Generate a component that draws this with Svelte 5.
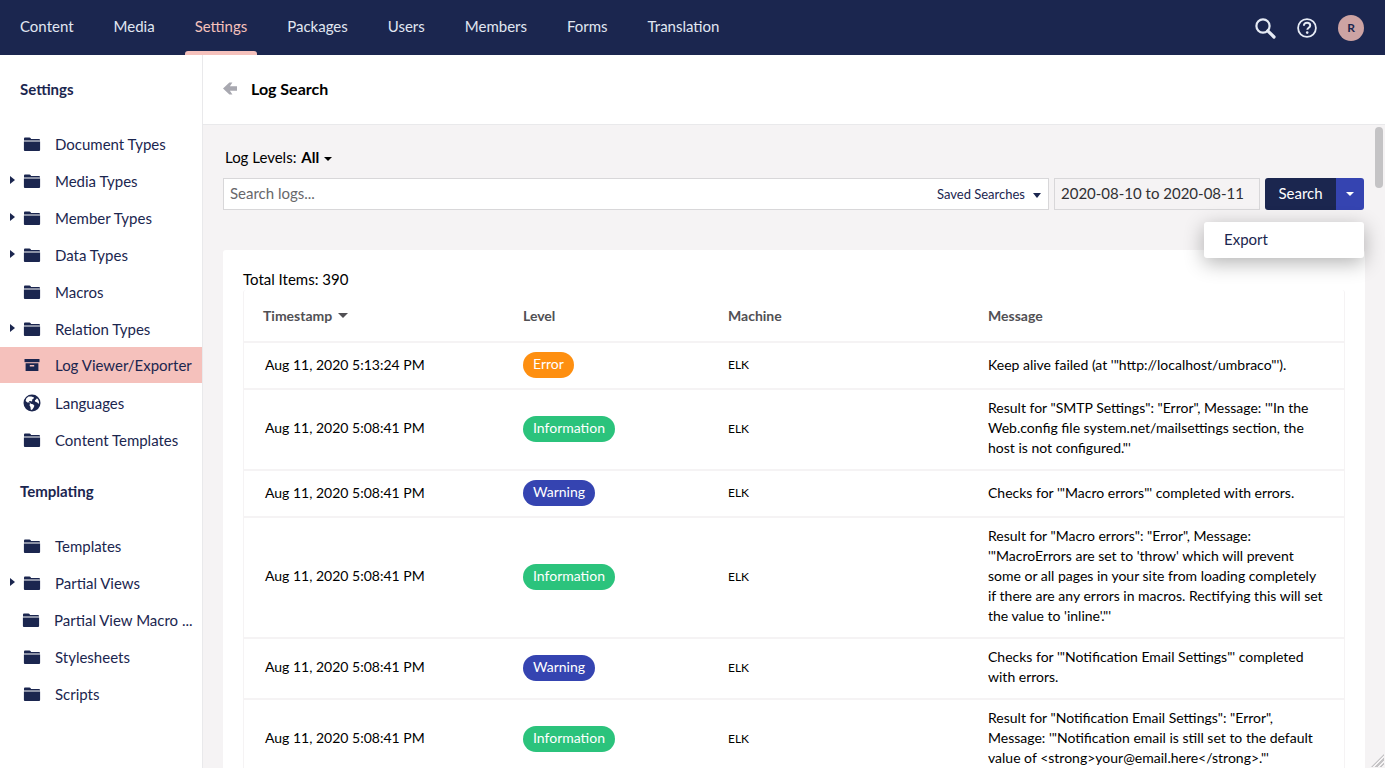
<script lang="ts">
	type TreeItem = { name: string; icon: string; arrow?: boolean; active?: boolean; nudge?: boolean };
	type LogRow = { time: string; level: string; message: string[] };

	const navItems = ['Content', 'Media', 'Settings', 'Packages', 'Users', 'Members', 'Forms', 'Translation'];

	const settingsItems: TreeItem[] = [
		{ name: 'Document Types', icon: 'folder' },
		{ name: 'Media Types', icon: 'folder', arrow: true },
		{ name: 'Member Types', icon: 'folder', arrow: true },
		{ name: 'Data Types', icon: 'folder', arrow: true },
		{ name: 'Macros', icon: 'folder' },
		{ name: 'Relation Types', icon: 'folder', arrow: true },
		{ name: 'Log Viewer/Exporter', icon: 'box', active: true },
		{ name: 'Languages', icon: 'globe' },
		{ name: 'Content Templates', icon: 'folder' }
	];

	const templatingItems: TreeItem[] = [
		{ name: 'Templates', icon: 'folder' },
		{ name: 'Partial Views', icon: 'folder', arrow: true },
		{ name: 'Partial View Macro ...', icon: 'folder', nudge: true },
		{ name: 'Stylesheets', icon: 'folder' },
		{ name: 'Scripts', icon: 'folder' }
	];

	const rows: LogRow[] = [
		{
			time: 'Aug 11, 2020 5:13:24 PM',
			level: 'Error',
			message: [`Keep alive failed (at '"http://localhost/umbraco"').`]
		},
		{
			time: 'Aug 11, 2020 5:08:41 PM',
			level: 'Information',
			message: [
				`Result for "SMTP Settings": "Error", Message: '"In the`,
				`Web.config file system.net/mailsettings section, the`,
				`host is not configured."'`
			]
		},
		{
			time: 'Aug 11, 2020 5:08:41 PM',
			level: 'Warning',
			message: [`Checks for '"Macro errors"' completed with errors.`]
		},
		{
			time: 'Aug 11, 2020 5:08:41 PM',
			level: 'Information',
			message: [
				`Result for "Macro errors": "Error", Message:`,
				`'"MacroErrors are set to 'throw' which will prevent`,
				`some or all pages in your site from loading completely`,
				`if there are any errors in macros. Rectifying this will set`,
				`the value to 'inline'."'`
			]
		},
		{
			time: 'Aug 11, 2020 5:08:41 PM',
			level: 'Warning',
			message: [`Checks for '"Notification Email Settings"' completed`, `with errors.`]
		},
		{
			time: 'Aug 11, 2020 5:08:41 PM',
			level: 'Information',
			message: [
				`Result for "Notification Email Settings": "Error",`,
				`Message: '"Notification email is still set to the default`,
				`value of <strong>your@email.here</strong>."'`
			]
		}
	];
</script>

{#snippet treeRow(item: TreeItem)}
	<li class="tree-row" class:active={item.active} class:nudge={item.nudge}>
		{#if item.arrow}<span class="tree-arrow"></span>{/if}
		{#if item.icon === 'folder'}
			<svg class="tree-icon" viewBox="0 0 18 15" aria-hidden="true">
				<path d="M1 2.2C1 1.5 1.5 1 2.2 1h4.2c.6 0 1 .3 1.3.8l.3.6h7.8c.7 0 1.2.5 1.2 1.2v.3H1z" />
				<path d="M.9 5h16.2v8.2c0 .8-.5 1.3-1.3 1.3H2.2c-.8 0-1.3-.5-1.3-1.3z" />
			</svg>
		{:else if item.icon === 'box'}
			<svg class="tree-icon" viewBox="0 0 18 15" aria-hidden="true">
				<path d="M1.5 1.5h15v3.2h-15z" />
				<path fill-rule="evenodd" d="M2.6 5.8h12.8v7.7H2.6zM6.8 7.5v1.6h4.4V7.5z" />
			</svg>
		{:else}
			<svg class="tree-icon" viewBox="0 0 18 18" aria-hidden="true">
				<path
					fill-rule="evenodd"
					d="M9 .5a8.5 8.5 0 1 1 0 17 8.5 8.5 0 0 1 0-17zM5.6 2.6 3.4 4.3 2.6 7l1.8 1.5 1.4-.1 1.3 1.2-.6 1.6 1 1.7.2 2.7 1.2.4 1.5-2 1-2.2-1.4-1.6-2.3-.5-.7-1.1-1.2.2.2-1.6 1.5-.3.8.6 1-.4-.4-1.3 1.6-1.1.4-1.5-2.7-.6zM13 5.6l-1.2.7.5 1.5 2 .8 1.2 1.5.6-2-1-2.6-1.2-1.2z"
				/>
			</svg>
		{/if}
		<span>{item.name}</span>
	</li>
{/snippet}

<div class="shell">
	<header class="topbar">
		<nav class="topnav">
			{#each navItems as item}
				<div class="nav-item" class:current={item === 'Settings'}>{item}</div>
			{/each}
		</nav>
		<div class="top-tools">
			<svg class="tool" viewBox="0 0 22 22" aria-hidden="true">
				<circle cx="9" cy="9" r="6.6" fill="none" stroke="#e6ebf5" stroke-width="2.2" />
				<path d="M13.8 13.8 20 20" stroke="#e6ebf5" stroke-width="3.2" stroke-linecap="round" />
			</svg>
			<svg class="tool help" viewBox="0 0 22 22" aria-hidden="true">
				<circle cx="11" cy="11" r="8.9" fill="none" stroke="#e6ebf5" stroke-width="1.8" />
				<path
					d="M7.9 8.7c0-1.9 1.3-3 3.2-3s3.1 1.1 3.1 2.7c0 2.3-2.9 2.4-2.9 4.4"
					fill="none"
					stroke="#e6ebf5"
					stroke-width="2"
				/>
				<circle cx="11.2" cy="15.6" r="1.3" fill="#e6ebf5" />
			</svg>
			<div class="avatar">R</div>
		</div>
	</header>

	<div class="body-row">
		<aside class="sidebar">
			<h3 class="tree-title">Settings</h3>
			<ul class="tree">
				{#each settingsItems as item}
					{@render treeRow(item)}
				{/each}
			</ul>
			<h3 class="tree-title">Templating</h3>
			<ul class="tree">
				{#each templatingItems as item}
					{@render treeRow(item)}
				{/each}
			</ul>
		</aside>

		<main class="main">
			<div class="page-head">
				<svg class="back" viewBox="0 0 14 13" aria-hidden="true">
					<path d="M0 6.5 6.4.4h3L6.9 4.3H14v4.4H6.9l2.5 3.9h-3z" />
				</svg>
				<h1>Log Search</h1>
			</div>

			<div class="page-body">
				<div class="levels">Log Levels: <b>All</b><span class="caret dark"></span></div>

				<div class="search-row">
					<div class="search-box">
						<span class="placeholder">Search logs...</span>
						<span class="saved">Saved Searches<span class="caret navy"></span></span>
					</div>
					<div class="date-box">2020-08-10 to 2020-08-11</div>
					<div class="split-btn">
						<div class="btn-main">Search</div>
						<div class="btn-side"><span class="caret light"></span></div>
						<div class="menu">Export</div>
					</div>
				</div>

				<section class="card">
					<div class="total">Total Items: 390</div>
					<div class="table">
						<div class="row head">
							<div>Timestamp<span class="caret grey"></span></div>
							<div>Level</div>
							<div>Machine</div>
							<div>Message</div>
						</div>
						{#each rows as row}
							<div class="row" class:multi={row.message.length > 1}>
								<div class="time">{row.time}</div>
								<div><span class="badge {row.level.toLowerCase()}">{row.level}</span></div>
								<div class="machine">ELK</div>
								<div class="message">
									{#each row.message as line}
										<div>{line}</div>
									{/each}
								</div>
							</div>
						{/each}
					</div>
				</section>
			</div>

			<div class="scroll-thumb"></div>
			<div class="grip"></div>
		</main>
	</div>
</div>

<style>
	:global(body) {
		margin: 0;
		overflow: hidden;
		font-family: Lato, 'Noto Sans', sans-serif;
	}

	.shell {
		display: flex;
		flex-direction: column;
		height: 100vh;
		overflow: hidden;
		color: #1b264f;
	}

	.topbar {
		flex: none;
		display: flex;
		justify-content: space-between;
		align-items: center;
		height: 55px;
		padding: 0 21px 0 0;
		background: #1b264f;
	}

	.topnav {
		display: flex;
		height: 100%;
	}

	.nav-item {
		position: relative;
		display: flex;
		align-items: center;
		padding: 0 20px;
		height: 52px;
		font-size: 15px;
		color: #e1e6f2;
	}

	.nav-item.current {
		color: #f5c1bc;
		padding: 0 10px;
		margin: 0 10px;
	}

	.nav-item.current::after {
		content: '';
		position: absolute;
		left: 0;
		right: 0;
		bottom: -3px;
		height: 4px;
		border-radius: 3px 3px 0 0;
		background: #f5c1bc;
	}

	.top-tools {
		display: flex;
		align-items: center;
	}

	.tool {
		width: 22px;
		height: 22px;
		margin-right: 20px;
	}

	.tool.help {
		margin-right: 20px;
	}

	.avatar {
		display: flex;
		align-items: center;
		justify-content: center;
		width: 26px;
		height: 26px;
		border-radius: 50%;
		background: #cda3a3;
		font-size: 12px;
		font-weight: 700;
		color: #1b264f;
	}

	.body-row {
		flex: 1;
		display: flex;
		min-height: 0;
	}

	.sidebar {
		flex: none;
		width: 202px;
		border-right: 1px solid #e9e9eb;
		background: #fff;
	}

	.tree-title {
		margin: 0;
		padding: 24px 0 0 20px;
		height: 46px;
		line-height: 20px;
		font-size: 15px;
		font-weight: 700;
		box-sizing: content-box;
	}

	.tree {
		list-style: none;
		margin: 0 0 -1px;
		padding: 0;
	}

	.tree-row {
		position: relative;
		display: flex;
		align-items: center;
		gap: 14px;
		height: 37px;
		padding-left: 23px;
		font-size: 15px;
		white-space: nowrap;
	}

	.tree-row.nudge {
		padding-left: 22px;
	}

	.tree-row.active {
		height: 36px;
		margin-bottom: 1px;
		background: #f5c1bc;
	}

	.tree-arrow {
		position: absolute;
		left: 10px;
		top: 14px;
		border-style: solid;
		border-width: 4px 0 4px 5px;
		border-color: transparent transparent transparent #1b264f;
	}

	.tree-icon {
		flex: none;
		width: 18px;
		height: 18px;
		fill: #1b264f;
	}

	.main {
		position: relative;
		flex: 1;
		min-width: 0;
		display: flex;
		flex-direction: column;
		background: #f5f3f4;
	}

	.page-head {
		flex: none;
		display: flex;
		align-items: center;
		gap: 14px;
		height: 67px;
		padding: 0 0 2px 20px;
		background: #fff;
		border-bottom: 1px solid #e9e9eb;
	}

	.back {
		width: 14px;
		height: 13px;
		fill: #a8a8b0;
	}

	h1 {
		margin: 0;
		font-size: 16px;
		font-weight: 700;
		color: #000;
	}

	.page-body {
		padding: 22px 20px 0;
	}

	.levels {
		height: 20px;
		line-height: 20px;
		margin-bottom: 11px;
		padding-left: 2px;
		font-size: 15px;
		color: #000;
	}

	.levels b {
		margin-left: 1px;
	}

	.caret {
		display: inline-block;
		margin-left: 5px;
		vertical-align: middle;
		border-style: solid;
		border-width: 4px 4px 0;
		border-color: currentColor transparent transparent;
	}

	.caret.dark {
		color: #000;
	}

	.caret.navy {
		margin-left: 8px;
		border-width: 5px 4.5px 0;
		color: #1b264f;
	}

	.caret.light {
		margin: 0;
		color: #fff;
	}

	.caret.grey {
		margin-left: 6px;
		margin-top: -3px;
		border-width: 5px 5px 0;
		color: #515054;
	}

	.search-row {
		display: flex;
		gap: 5px;
		height: 32px;
		padding-right: 1px;
	}

	.search-box {
		flex: 1;
		display: flex;
		justify-content: space-between;
		align-items: center;
		box-sizing: border-box;
		padding: 0 7px 0 6px;
		background: #fff;
		border: 1px solid #d8d7d9;
	}

	.placeholder {
		margin-top: -2px;
		font-size: 15px;
		color: #68676b;
	}

	.saved {
		font-size: 13px;
		color: #1b264f;
	}

	.date-box {
		display: flex;
		align-items: center;
		box-sizing: border-box;
		width: 206px;
		padding: 0 0 2px 6px;
		background: #f5f3f4;
		border: 1px solid #d8d7d9;
		font-size: 15px;
		color: #303033;
		white-space: nowrap;
	}

	.split-btn {
		position: relative;
		display: flex;
		width: 99px;
		border-radius: 3px;
		overflow: visible;
		color: #fff;
	}

	.btn-main {
		display: flex;
		align-items: center;
		justify-content: center;
		box-sizing: border-box;
		width: 71px;
		padding-bottom: 2px;
		border-radius: 3px 0 0 3px;
		background: #1b264f;
		font-size: 15px;
	}

	.btn-side {
		display: flex;
		align-items: center;
		justify-content: center;
		width: 28px;
		border-radius: 0 3px 3px 0;
		background: #3544b1;
	}

	.menu {
		position: absolute;
		top: 44px;
		right: 0;
		z-index: 2;
		width: 160px;
		height: 36px;
		box-sizing: border-box;
		padding-left: 20px;
		line-height: 34px;
		border-radius: 3px;
		background: #fff;
		box-shadow: 0 5px 20px rgba(0, 0, 0, 0.3);
		font-size: 15px;
		color: #1b264f;
	}

	.card {
		margin-top: 40px;
		padding: 19px 20px 0;
		background: #fff;
		border-radius: 3px 3px 0 0;
		color: #000;
	}

	.total {
		height: 21px;
		line-height: 20px;
		font-size: 15px;
	}

	.table {
		border-left: 1px solid #f5f3f4;
		border-right: 1px solid #f5f3f4;
		border-radius: 3px;
	}

	.row {
		display: grid;
		grid-template-columns: 258px 205px 260px 1fr;
		align-items: center;
		min-height: 46px;
		box-sizing: content-box;
		border-bottom: 2px solid #f5f3f4;
		padding: 0 0 0 21px;
		font-size: 14px;
		line-height: 20px;
		margin-bottom: -1px;
	}

	.row.head {
		height: 51px;
		padding-left: 19px;
		grid-template-columns: 260px 205px 260px 1fr;
		font-weight: 700;
		color: #515054;
	}

	.row.multi .time {
		padding-bottom: 2px;
	}

	.message {
		padding: 10px 20px 10px 0;
	}

	.row.multi .message {
		padding: 9px 20px 11px 0;
	}

	.machine {
		font-size: 12px;
	}

	.badge {
		display: inline-block;
		height: 26px;
		line-height: 24px;
		box-sizing: border-box;
		padding: 0 10px;
		border-radius: 13px;
		color: #fff;
		font-size: 14px;
		vertical-align: middle;
	}

	.badge.error {
		background: #fe8f10;
	}

	.badge.information {
		background: #2bc37c;
	}

	.badge.warning {
		background: #3544b1;
	}

	.scroll-thumb {
		position: absolute;
		top: 72px;
		right: 2px;
		width: 8px;
		height: 61px;
		border-radius: 4px;
		background: #c4c3c5;
	}

	.grip {
		position: absolute;
		right: 1px;
		bottom: 1px;
		width: 13px;
		height: 13px;
		clip-path: polygon(100% 0, 100% 100%, 0 100%);
		background: repeating-linear-gradient(135deg, #c4c3c5 0 1.5px, transparent 1.5px 3px);
	}
</style>
